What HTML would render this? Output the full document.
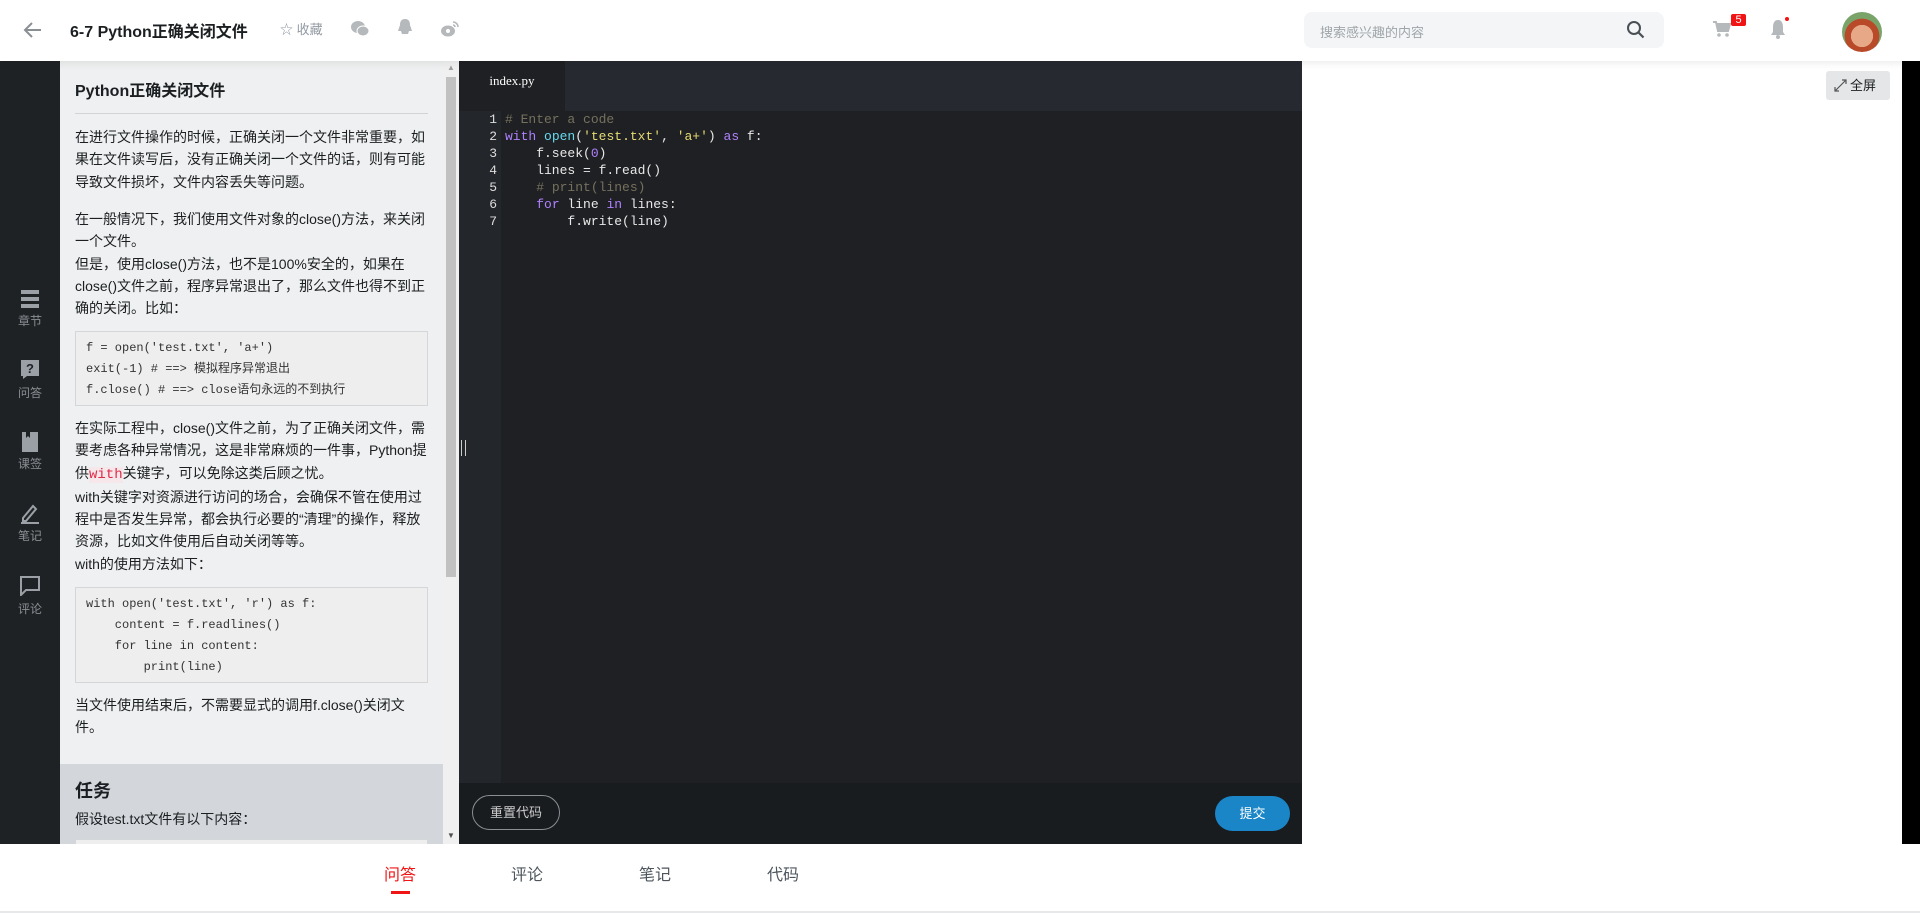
<!DOCTYPE html>
<html><head><meta charset="utf-8"><style>
*{margin:0;padding:0;box-sizing:border-box}
body{width:1920px;height:913px;overflow:hidden;background:#fff;font-family:"Liberation Sans","Noto Sans CJK SC",sans-serif;position:relative}
.abs{position:absolute}
.hdr{left:0;top:0;width:1920px;height:61px;background:#fff;box-shadow:0 2px 8px rgba(0,0,0,.08);z-index:5}
.side{left:0;top:61px;width:60px;height:783px;background:#1f2225}
.si{position:absolute;left:0;width:60px;text-align:center;color:#8a8f94;font-size:12px}
.panel{left:60px;top:61px;width:383px;height:783px;background:#eef0f1;overflow:hidden;color:#1c1f21;font-size:14px}
.p{position:absolute;left:15px;width:357px;line-height:22.3px}
.cb{position:absolute;left:15px;width:353px;border:1px solid #d4d6d8;background:#eeeeee;font-family:"Liberation Mono","Noto Sans CJK SC",monospace;font-size:12px;padding:6px 10px;line-height:21px;color:#333;white-space:pre}
.sb{left:443px;top:61px;width:16px;height:783px;background:#f0f0f0}
.ed{left:459px;top:61px;width:843px;height:783px;background:#1f2023}
.code{font-family:"Liberation Mono",monospace;font-size:13px;line-height:17px;white-space:pre;color:#e8e8e8}
.tab{position:absolute;top:861px;font-size:16px;color:#4d555d;width:60px;text-align:center}
</style></head><body>
<div class="abs hdr">
 <svg class="abs" style="left:22px;top:19px" width="22" height="22" viewBox="0 0 22 22"><path d="M19 11H4M10 4l-7 7 7 7" stroke="#8a8f94" stroke-width="2" fill="none"/></svg>
 <div class="abs" style="left:70px;top:18px;font-size:16px;font-weight:bold;color:#1c1f21">6-7 Python正确关闭文件</div>
 <div class="abs" style="left:280px;top:19px;font-size:13px;color:#9199a1">☆ 收藏</div>
 <svg class="abs" style="left:350px;top:20px" width="20" height="18"><ellipse cx="8" cy="7" rx="7" ry="6" fill="#b5b9bc"/><ellipse cx="13" cy="11" rx="6" ry="5" fill="#b5b9bc" stroke="#fff"/></svg>
 <svg class="abs" style="left:397px;top:18px" width="16" height="20"><path d="M8 1C4 1 3 4 3 7L1 13h3l1 3h6l1-3h3l-2-6C13 4 12 1 8 1z" fill="#b5b9bc"/></svg>
 <svg class="abs" style="left:440px;top:19px" width="20" height="19"><ellipse cx="8" cy="12" rx="7" ry="5.5" fill="#b5b9bc"/><path d="M13 3a5 5 0 0 1 5 5M13 6a2 2 0 0 1 2 2" stroke="#b5b9bc" stroke-width="1.6" fill="none"/><circle cx="8" cy="12" r="2" fill="#fff"/></svg>
 <div class="abs" style="left:1304px;top:12px;width:360px;height:36px;background:#f3f5f6;border-radius:8px;font-size:13px;color:#a0a5a9;padding:10px 16px">搜索感兴趣的内容</div>
 <svg class="abs" style="left:1625px;top:19px" width="22" height="22"><circle cx="9" cy="9" r="6" stroke="#4a4f55" stroke-width="2" fill="none"/><path d="M13.5 13.5l5 5" stroke="#4a4f55" stroke-width="2.2"/></svg>
 <svg class="abs" style="left:1712px;top:20px" width="20" height="18"><path d="M1 2h3l2 9h10l2-7H5" stroke="#b5b9bc" stroke-width="2" fill="#b5b9bc"/><circle cx="7" cy="15" r="1.8" fill="#b5b9bc"/><circle cx="15" cy="15" r="1.8" fill="#b5b9bc"/></svg>
 <div class="abs" style="left:1731px;top:14px;width:15px;height:12px;background:#f01414;color:#fff;font-size:11px;line-height:12px;text-align:center;border-radius:2px">5</div>
 <svg class="abs" style="left:1769px;top:18px" width="18" height="22"><path d="M9 2c-4 0-5 4-5 7v5l-2 3h14l-2-3V9c0-3-1-7-5-7z" fill="#b5b9bc"/><circle cx="9" cy="19" r="2" fill="#b5b9bc"/></svg>
 <div class="abs" style="left:1785px;top:17px;width:4px;height:4px;border-radius:2px;background:#f01414"></div>
 <div class="abs" style="left:1842px;top:12px;width:40px;height:40px;border-radius:50%;background:radial-gradient(circle at 50% 60%,#e7a888 0 35%,#b84a2a 36% 55%,#7aa36a 56%)"></div>
</div>
<div class="abs side">
 <svg class="abs" style="left:20px;top:229px" width="20" height="18"><rect x="1" y="0" width="18" height="4" fill="#9aa0a5"/><rect x="1" y="7" width="18" height="4" fill="#9aa0a5"/><rect x="1" y="14" width="18" height="4" fill="#9aa0a5"/></svg>
 <div class="si" style="top:251px">章节</div>
 <svg class="abs" style="left:21px;top:299px" width="18" height="20"><path d="M0 0h18v16H6l-4 3V16H0z" fill="#9aa0a5"/><text x="9" y="13" font-size="13" font-weight="bold" fill="#1f2225" text-anchor="middle" font-family="Liberation Sans">?</text></svg>
 <div class="si" style="top:323px">问答</div>
 <svg class="abs" style="left:22px;top:371px" width="16" height="20"><path d="M0 0h4v6l2-2 2 2V0h8v20H0z" fill="#9aa0a5"/></svg>
 <div class="si" style="top:394px">课签</div>
 <svg class="abs" style="left:20px;top:442px" width="20" height="21"><path d="M3 15l10-12 3 3-10 12H3z" stroke="#9aa0a5" stroke-width="2" fill="none"/><path d="M1 20h18" stroke="#9aa0a5" stroke-width="2"/></svg>
 <div class="si" style="top:466px">笔记</div>
 <svg class="abs" style="left:20px;top:515px" width="20" height="20"><path d="M1 1h18v13H6l-5 5z" stroke="#9aa0a5" stroke-width="2" fill="none"/></svg>
 <div class="si" style="top:539px">评论</div>
</div>
<div class="abs panel">
 <div class="abs" style="left:15px;top:16px;font-size:16px;font-weight:bold">Python正确关闭文件</div>
 <div class="abs" style="left:15px;top:52px;width:353px;height:1px;background:#d0d4d7"></div>
 <div class="p" style="top:65px">在进行文件操作的时候，正确关闭一个文件非常重要，如果在文件读写后，没有正确关闭一个文件的话，则有可能导致文件损坏，文件内容丢失等问题。</div>
 <div class="p" style="top:147px">在一般情况下，我们使用文件对象的close()方法，来关闭一个文件。<br>但是，使用close()方法，也不是100%安全的，如果在close()文件之前，程序异常退出了，那么文件也得不到正确的关闭。比如：</div>
 <div class="cb" style="top:270px;height:75px">f = open('test.txt', 'a+')
exit(-1) # ==> 模拟程序异常退出
f.close() # ==> close语句永远的不到执行</div>
 <div class="p" style="top:356px">在实际工程中，close()文件之前，为了正确关闭文件，需要考虑各种异常情况，这是非常麻烦的一件事，Python提供<span style="color:#e02b4a;font-family:'Liberation Mono',monospace;background:#f6e8ea">with</span>关键字，可以免除这类后顾之忧。<br>with关键字对资源进行访问的场合，会确保不管在使用过程中是否发生异常，都会执行必要的“清理”的操作，释放资源，比如文件使用后自动关闭等等。<br>with的使用方法如下：</div>
 <div class="cb" style="top:526px;height:96px">with open('test.txt', 'r') as f:
    content = f.readlines()
    for line in content:
        print(line)</div>
 <div class="p" style="top:633px;width:345px">当文件使用结束后，不需要显式的调用f.close()关闭文件。</div>
 <div class="abs" style="left:0;top:703px;width:383px;height:80px;background:#d3d7db"></div>
 <div class="abs" style="left:15px;top:716px;font-size:18px;font-weight:bold">任务</div>
 <div class="abs" style="left:15px;top:748px">假设test.txt文件有以下内容：</div>
 <div class="abs" style="left:15px;top:778px;width:353px;height:10px;background:#eee;border:1px solid #d4d6d8"></div>
</div>
<div class="abs sb"><div class="abs" style="left:3px;top:16px;width:10px;height:500px;background:#c1c1c1"></div>
 <div class="abs" style="left:4px;top:2px;font-size:8px;color:#a0a0a0">▲</div><div class="abs" style="left:4px;top:770px;font-size:8px;color:#505050">▼</div></div>
<div class="abs ed">
 <div class="abs" style="left:0;top:0;width:843px;height:50px;background:#262a30"></div>
 <div class="abs" style="left:0;top:0;width:106px;height:50px;background:#1f2023;color:#fff;font-family:'Liberation Serif',serif;font-size:13px;text-align:center;line-height:40px">index.py</div>
 <div class="abs" style="left:0;top:50px;width:42px;height:672px;background:#23262a"></div>
 <div class="abs code" style="left:0;top:50px;width:38px;text-align:right;color:#ddd">1
2
3
4
5
6
7</div>
 <div class="abs code" style="left:46px;top:50px"><span style="color:#75715e"># Enter a code</span>
<span style="color:#ae81ff">with</span> <span style="color:#66d9ef">open</span>(<span style="color:#e6db74">'test.txt'</span>, <span style="color:#e6db74">'a+'</span>) <span style="color:#ae81ff">as</span> f:
    f.seek(<span style="color:#ae81ff">0</span>)
    lines = f.read()
    <span style="color:#75715e"># print(lines)</span>
    <span style="color:#ae81ff">for</span> line <span style="color:#ae81ff">in</span> lines:
        f.write(line)</div>
 <div class="abs" style="left:2px;top:379px;width:5px;height:16px;border-left:1px solid #ccc;border-right:1px solid #ccc"></div>
 <div class="abs" style="left:0;top:722px;width:843px;height:61px;background:#191c1f"></div>
 <div class="abs" style="left:13px;top:734px;width:88px;height:35px;border:1px solid #8a8f94;border-radius:18px;color:#ccc;font-size:13px;text-align:center;line-height:33px">重置代码</div>
 <div class="abs" style="left:756px;top:735px;width:75px;height:35px;background:#1a86c7;border-radius:18px;color:#fff;font-size:13px;text-align:center;line-height:35px">提交</div>
</div>
<div class="abs" style="left:1902px;top:61px;width:18px;height:783px;background:#000"></div>
<div class="abs" style="left:1826px;top:71px;width:64px;height:29px;background:#e4e6e8;border-radius:3px;font-size:13px;color:#1c1f21;line-height:29px;padding-left:24px">全屏</div>
<svg class="abs" style="left:1834px;top:79px" width="13" height="13"><path d="M1 12L12 1M8 1h4v4M1 8v4h4" stroke="#555" stroke-width="1.2" fill="none"/></svg>
<div class="tab" style="left:370px;color:#f01414">问答</div>
<div class="abs" style="left:391px;top:891px;width:19px;height:3px;background:#f01414"></div>
<div class="tab" style="left:497px">评论</div>
<div class="tab" style="left:625px">笔记</div>
<div class="tab" style="left:753px">代码</div>
<div class="abs" style="left:0;top:911px;width:1920px;height:2px;background:#e6e8ea"></div>
</body></html>
